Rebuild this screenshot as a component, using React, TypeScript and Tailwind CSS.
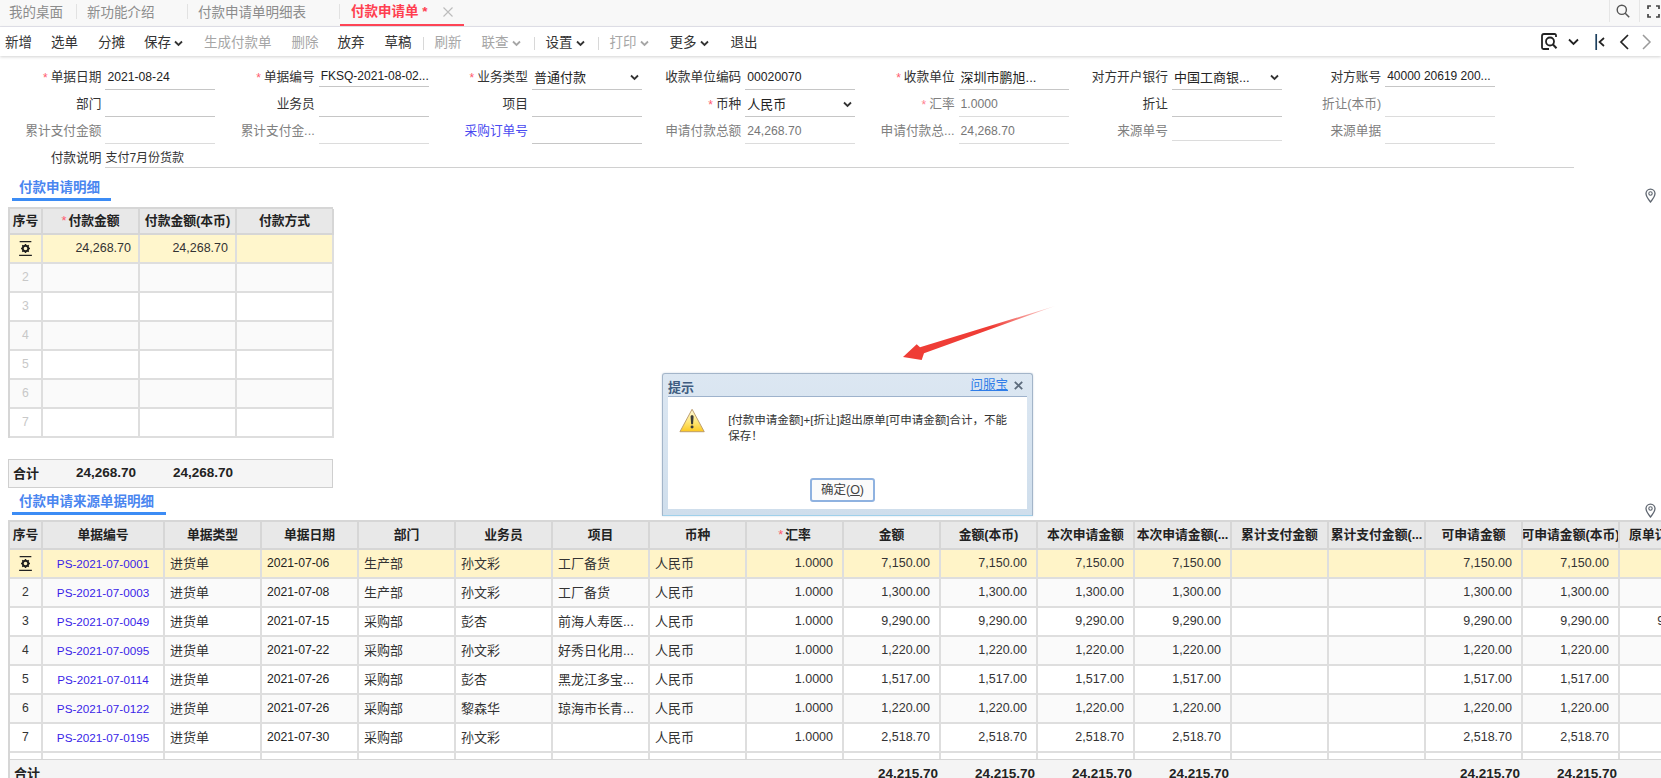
import React from "react";

const Chev = ({ c = "#333" }: { c?: string }) => (
  <svg width="9" height="7" viewBox="0 0 9 7" fill="none" className="shrink-0">
    <path d="M1 1.5l3.5 3.5L8 1.5" stroke={c} strokeWidth="1.8" />
  </svg>
);

const Pin = () => (
  <svg width="11" height="15" viewBox="0 0 11 15" fill="none">
    <path d="M5.5 14C3 11 1 8.4 1 5.6a4.5 4.5 0 0 1 9 0C10 8.4 8 11 5.5 14z" stroke="#5f6670" strokeWidth="1.3" />
    <circle cx="5.5" cy="5.5" r="1.7" stroke="#5f6670" strokeWidth="1.1" />
  </svg>
);

const Gear = () => (
  <svg width="17" height="17" viewBox="0 0 16 16" fill="none">
    <path d="M2.5 1.5h11M2 14.5h12" stroke="#222" strokeWidth="1.2" />
    <circle cx="8" cy="8" r="2.6" stroke="#222" strokeWidth="1.8" />
    <path d="M8 3.8v1.4M8 10.8v1.4M3.8 8h1.4M10.8 8h1.4M5 5l1 1M10 10l1 1M11 5l-1 1M6 10l-1 1" stroke="#222" strokeWidth="1.3" />
  </svg>
);

type F = {
  l: string; v?: string; star?: boolean; gray?: boolean; blue?: boolean; chev?: boolean; short?: boolean; cjk?: boolean; small?: boolean;
};

const rows: F[][] = [
  [
    { l: "单据日期", v: "2021-08-24", star: true },
    { l: "单据编号", v: "FKSQ-2021-08-02...", star: true, short: true, small: true },
    { l: "业务类型", v: "普通付款", star: true, chev: true, cjk: true },
    { l: "收款单位编码", v: "00020070" },
    { l: "收款单位", v: "深圳市鹏旭...", star: true, cjk: true },
    { l: "对方开户银行", v: "中国工商银...", chev: true, cjk: true },
    { l: "对方账号", v: "40000 20619 200...", short: true, small: true },
  ],
  [
    { l: "部门" },
    { l: "业务员" },
    { l: "项目" },
    { l: "币种", v: "人民币", star: true, chev: true, cjk: true },
    { l: "汇率", v: "1.0000", star: true, gray: true },
    { l: "折让" },
    { l: "折让(本币)", gray: true },
  ],
  [
    { l: "累计支付金额", gray: true },
    { l: "累计支付金...", gray: true },
    { l: "采购订单号", blue: true },
    { l: "申请付款总额", v: "24,268.70", gray: true },
    { l: "申请付款总...", v: "24,268.70", gray: true },
    { l: "来源单号", gray: true, short: true },
    { l: "来源单据", gray: true },
  ],
];

const Field = ({ f }: { f: F }) => (
  <div className="flex items-start h-[27px]">
    <div className={`w-[99px] h-[24px] mt-[3px] flex items-center justify-end text-[12.7px] whitespace-nowrap ${f.gray ? "text-[#808080]" : f.blue ? "text-[#4a4af0]" : "text-[#333]"}`}>
      {f.star && <span className={`mr-[3px] text-[12px] ${f.gray ? "text-[#ff8090]" : "text-[#ff5a6e]"}`}>*</span>}
      {f.l}
    </div>
    <div
      className={`ml-[4px] w-[110px] mt-[3px] flex items-center justify-between pl-[2px] pr-[3px] border-b whitespace-nowrap ${f.short ? "h-[21px]" : "h-[24px]"} ${f.gray ? "border-[#dcdcdc] text-[#777]" : "border-[#c6c6c6] text-[#222]"} ${f.cjk ? "text-[13px]" : f.small ? "text-[12px]" : "text-[12.2px]"}`}
    >
      <span>{f.v}</span>
      {f.chev && <Chev />}
    </div>
  </div>
);

const SectionHead = ({ title, w, pin }: { title: string; w: string; pin: string }) => (
  <div className="flex items-start">
    <div className={`ml-[12px] flex items-center pl-[7px] border-b-[3px] border-[#3c8cf5] text-[13.5px] font-bold text-[#4a86f0] whitespace-nowrap ${w}`}>
      {title}
    </div>
    <div className={`ml-auto mr-[5px] ${pin}`}>
      <Pin />
    </div>
  </div>
);

const top = "grid-cols-[33px_97px_97px_97px]";
const Wide = "grid-cols-[33px_122px_repeat(16,97px)]";
const cell = "border-r-2 border-b-2 border-[#dedede] flex items-center overflow-hidden whitespace-nowrap";
const head = "border-r-2 border-b-2 border-[#d6d6d6] bg-[#e8e8e8] flex items-center justify-center overflow-hidden whitespace-nowrap text-[12.8px] font-bold text-[#222]";
const num = "justify-end pr-[9px] text-[12.5px] text-[#333]";
const numTop = "justify-end pr-[7px] text-[12.5px] text-[#333]";
const txt = "pl-[5px] text-[13px] text-[#333]";

const heads = ["序号", "单据编号", "单据类型", "单据日期", "部门", "业务员", "项目", "币种", "*汇率", "金额", "金额(本币)", "本次申请金额", "本次申请金额(...", "累计支付金额", "累计支付金额(...", "可申请金额", "可申请金额(本币)", "原单订单金额"];

const data = [
  ["0001", "07-06", "生产部", "孙文彩", "工厂备货", "7,150.00"],
  ["0003", "07-08", "生产部", "孙文彩", "工厂备货", "1,300.00"],
  ["0049", "07-15", "采购部", "彭杏", "前海人寿医...", "9,290.00"],
  ["0095", "07-22", "采购部", "孙文彩", "好秀日化用...", "1,220.00"],
  ["0114", "07-26", "采购部", "彭杏", "黑龙江多宝...", "1,517.00"],
  ["0122", "07-26", "采购部", "黎森华", "琼海市长青...", "1,220.00"],
  ["0195", "07-30", "采购部", "孙文彩", "", "2,518.70"],
];

const Arrow = () => (
  <svg width="160" height="64" viewBox="0 0 160 64" className="absolute left-[900px] top-[300px]">
    <defs>
      <linearGradient id="ar" x1="0" y1="1" x2="1" y2="0">
        <stop offset="0.6" stopColor="#ef3d36" />
        <stop offset="1" stopColor="#ef3d36" stopOpacity="0.15" />
      </linearGradient>
    </defs>
    <path d="M3 57L16.7 44.3L20 47.3L155 6L24 53.3L21.7 60Z" fill="url(#ar)" />
  </svg>
);

const Warn = () => (
  <svg width="29" height="27" viewBox="0 0 28 26">
    <defs>
      <linearGradient id="wy" x1="0" y1="0" x2="0" y2="1">
        <stop offset="0" stopColor="#fffbe0" />
        <stop offset="0.55" stopColor="#ffe77a" />
        <stop offset="1" stopColor="#fcc81e" />
      </linearGradient>
    </defs>
    <path d="M14 1L27 25H1Z" fill="url(#wy)" stroke="#b9996a" strokeWidth="1" strokeLinejoin="round" />
    <path d="M14 7.5c1.2 0 1.7.7 1.6 1.7L15 17h-2l-.6-7.8c-.1-1 .4-1.7 1.6-1.7z" fill="#3a3a3a" />
    <circle cx="14" cy="20" r="1.6" fill="#3a3a3a" />
  </svg>
);

export default function App() {
  return (
    <div className="relative w-[1661px] h-[778px] overflow-hidden bg-white font-['Liberation_Sans','Noto_Sans_CJK_SC',sans-serif]">
      {/* Tabs */}
      <div className="flex items-start h-[27px] bg-[#f8f8f8] border-b border-[#e4e4ec] text-[13.5px] text-[#8c8c8c]">
        <div className="w-[77px] h-[26px] pl-[9px] flex items-center">我的桌面<span className="ml-auto mb-[3px] w-px h-[15px] bg-[#e2e2e2]" /></div>
        <div className="w-[111px] h-[26px] pl-[10px] flex items-center">新功能介绍<span className="ml-auto mb-[3px] w-px h-[15px] bg-[#e2e2e2]" /></div>
        <div className="w-[152px] h-[26px] pl-[10px] flex items-center">付款申请单明细表<span className="ml-auto mb-[3px] w-px h-[15px] bg-[#e2e2e2]" /></div>
        <div className="w-[124px] h-[26px] pl-[11px] flex items-center border-b-[2.5px] border-[#ff4556] text-[#ff3f50] font-bold">
          付款申请单 *
          <svg width="10" height="10" viewBox="0 0 10 10" className="ml-[15px]"><path d="M0.5 0.5l9 9M9.5 0.5l-9 9" stroke="#bcbcbc" strokeWidth="1.1" /></svg>
        </div>
        <div className="ml-auto flex items-center h-[22px]">
          <div className="w-[30px] h-[22px] border-l border-[#e6e6e6] flex items-center pl-[6px]">
            <svg width="14" height="14" viewBox="0 0 14 14" fill="none"><circle cx="5.8" cy="5.8" r="4.6" stroke="#555" strokeWidth="1.4" /><path d="M9.2 9.2l4 4" stroke="#555" strokeWidth="1.5" /></svg>
          </div>
          <div className="w-[22px] h-[22px] border-l border-[#e6e6e6] flex items-center pl-[7px]">
            <svg width="13" height="13" viewBox="0 0 13 13" fill="none"><path d="M1 4V1h3M9 1h3v3M12 9v3H9M4 12H1V9" stroke="#444" strokeWidth="1.7" /></svg>
          </div>
        </div>
      </div>

      {/* Toolbar */}
      <div className="relative flex items-center h-[29px] bg-white shadow-[0_1px_3px_rgba(0,0,0,0.18)] text-[13.5px] text-[#333] whitespace-nowrap pl-[5px]">
        <div className="flex items-center pt-[3px]">
          <span>新增</span>
          <span className="ml-[19px]">选单</span>
          <span className="ml-[20px]">分摊</span>
          <span className="ml-[19px] flex items-center gap-[3px]">保存<Chev /></span>
          <span className="ml-[21px] text-[#a6a6a6]">生成付款单</span>
          <span className="ml-[20px] text-[#a6a6a6]">删除</span>
          <span className="ml-[19px]">放弃</span>
          <span className="ml-[20px]">草稿</span>
          <span className="ml-[11px] w-px h-[13px] bg-[#d8d8d8]" />
          <span className="ml-[11px] text-[#a6a6a6]">刷新</span>
          <span className="ml-[20px] flex items-center gap-[3px] text-[#a6a6a6]">联查<Chev c="#a6a6a6" /></span>
          <span className="ml-[13px] w-px h-[13px] bg-[#d8d8d8]" />
          <span className="ml-[11px] flex items-center gap-[3px]">设置<Chev /></span>
          <span className="ml-[13px] w-px h-[13px] bg-[#d8d8d8]" />
          <span className="ml-[11px] flex items-center gap-[3px] text-[#a6a6a6]">打印<Chev c="#a6a6a6" /></span>
          <span className="ml-[21px] flex items-center gap-[3px]">更多<Chev /></span>
          <span className="ml-[22px]">退出</span>
        </div>
        <div className="ml-auto flex items-center pr-[9px]">
          <svg width="17" height="17" viewBox="0 0 17 17" fill="none">
            <path d="M15 4V2.5Q15 1 13.5 1H3Q1 1 1 3V14.5Q1 16 2.5 16H8" stroke="#222" strokeWidth="1.8" />
            <circle cx="9" cy="8.5" r="4" stroke="#222" strokeWidth="1.8" />
            <path d="M12 11.5l3.5 3.8" stroke="#222" strokeWidth="2" />
          </svg>
          <span className="ml-[10px]"><svg width="11" height="8" viewBox="0 0 11 8" fill="none"><path d="M1 1.5l4.5 4.5L10 1.5" stroke="#222" strokeWidth="1.8" /></svg></span>
          <svg width="10" height="16" viewBox="0 0 10 16" fill="none" className="ml-[16px]"><path d="M1.2 0v16" stroke="#1c3f5e" strokeWidth="1.7" /><path d="M9 4l-4.5 4L9 12" stroke="#222" strokeWidth="1.7" /></svg>
          <svg width="10" height="16" viewBox="0 0 10 16" fill="none" className="ml-[14px]"><path d="M9 1L2 8l7 7" stroke="#222" strokeWidth="1.7" /></svg>
          <svg width="10" height="16" viewBox="0 0 10 16" fill="none" className="ml-[13px]"><path d="M1 1l7 7-7 7" stroke="#9a9a9a" strokeWidth="1.5" /></svg>
        </div>
      </div>

      {/* Form */}
      <div className="pt-[7px] pl-[2.4px]">
        {rows.map((r, i) => (
          <div key={i} className="grid grid-cols-[repeat(7,213.3px)]">
            {r.map((f, j) => (
              <Field key={j} f={f} />
            ))}
          </div>
        ))}
        <div className="flex items-end h-[24px]">
          <div className="w-[99px] h-[21px] pt-[2px] flex items-center justify-end text-[12.7px] text-[#333]">付款说明</div>
          <div className="ml-[4px] w-[1469px] h-[21px] pt-[2px] flex items-center border-b border-[#d0d0d0] text-[12px] text-[#333]">支付7月份货款</div>
        </div>
      </div>

      {/* Section 1 */}
      <div className="mt-[9px]">
        <SectionHead title="付款申请明细" w="w-[99px] h-[24px] pt-[2px]" pin="mt-[11px]" />
      </div>
      <div className={`mt-[4px] ml-[8px] w-[325px] border-t-2 border-l-2 border-[#d6d6d6] grid ${top}`}>
        <div className={`${head} h-[26px]`}>序号</div>
        <div className={head}><span className="text-[#ff5a6e] font-normal mr-[2px]">*</span>付款金额</div>
        <div className={head}>付款金额(本币)</div>
        <div className={head}>付款方式</div>
        <div className={`${cell} h-[29px] bg-[#fff6cc] justify-center`}><Gear /></div>
        <div className={`${cell} bg-[#fff6cc] ${numTop}`}>24,268.70</div>
        <div className={`${cell} bg-[#fff6cc] ${numTop}`}>24,268.70</div>
        <div className={`${cell} bg-[#fff6cc]`} />
        {[2, 3, 4, 5, 6, 7].map((n) => (
          <React.Fragment key={n}>
            <div className={`${cell} h-[29px] justify-center text-[12.2px] text-[#c8c8c8] ${n % 2 === 0 ? "bg-[#fafafa]" : "bg-white"}`}>{n}</div>
            <div className={`${cell} ${n % 2 === 0 ? "bg-[#fafafa]" : "bg-white"}`} />
            <div className={`${cell} ${n % 2 === 0 ? "bg-[#fafafa]" : "bg-white"}`} />
            <div className={`${cell} ${n % 2 === 0 ? "bg-[#fafafa]" : "bg-white"}`} />
          </React.Fragment>
        ))}
      </div>

      {/* Summary */}
      <div className={`mt-[21px] ml-[8px] w-[325px] h-[29px] border border-[#cfcfcf] bg-[#f5f5f5] grid ${top} items-center text-[13.5px] font-bold text-[#222]`}>
        <div className="pl-[4px] text-[13px]">合计</div>
        <div className="text-right pr-[3px]">24,268.70</div>
        <div className="text-right pr-[3px]">24,268.70</div>
        <div />
      </div>

      {/* Section 2 */}
      <div className="mt-[4px]">
        <SectionHead title="付款申请来源单据明细" w="w-[154px] h-[23px]" pin="mt-[11px]" />
      </div>
      <div className="mt-[2px] ml-[8px] overflow-hidden border-t-2 border-l-2 border-[#d6d6d6]">
        <div className={`grid ${Wide} w-[1707px]`}>
          {heads.map((h) => (
            <div key={h} className={`${head} h-[28px]`}>
              {h.startsWith("*") ? (
                <>
                  <span className="text-[#ff5a6e] font-normal mr-[2px]">*</span>
                  {h.slice(1)}
                </>
              ) : (
                h
              )}
            </div>
          ))}
          {data.map((d, i) => {
            const bg = i === 0 ? "bg-[#fff4c8]" : i % 2 === 1 ? "bg-[#fafafa]" : "bg-white";
            return (
              <React.Fragment key={i}>
                <div className={`${cell} ${bg} h-[29px] justify-center text-[12.2px] text-[#333]`}>{i === 0 ? <Gear /> : i + 1}</div>
                <div className={`${cell} ${bg} justify-center text-[11.7px] text-[#3a1fe8]`}>PS-2021-07-{d[0]}</div>
                <div className={`${cell} ${bg} ${txt}`}>进货单</div>
                <div className={`${cell} ${bg} pl-[5px] text-[12.2px] text-[#222]`}>2021-{d[1]}</div>
                <div className={`${cell} ${bg} ${txt}`}>{d[2]}</div>
                <div className={`${cell} ${bg} ${txt}`}>{d[3]}</div>
                <div className={`${cell} ${bg} ${txt}`}>{d[4]}</div>
                <div className={`${cell} ${bg} ${txt}`}>人民币</div>
                <div className={`${cell} ${bg} ${num}`}>1.0000</div>
                <div className={`${cell} ${bg} ${num}`}>{d[5]}</div>
                <div className={`${cell} ${bg} ${num}`}>{d[5]}</div>
                <div className={`${cell} ${bg} ${num}`}>{d[5]}</div>
                <div className={`${cell} ${bg} ${num}`}>{d[5]}</div>
                <div className={`${cell} ${bg}`} />
                <div className={`${cell} ${bg}`} />
                <div className={`${cell} ${bg} ${num}`}>{d[5]}</div>
                <div className={`${cell} ${bg} ${num}`}>{d[5]}</div>
                <div className={`${cell} ${bg} ${num}`}>{i === 2 ? "9,290.00" : ""}</div>
              </React.Fragment>
            );
          })}
          {heads.map((h) => (
            <div key={h} className="h-[6px] border-r-2 border-[#dedede] bg-white" />
          ))}
        </div>
        <div className={`grid ${Wide} w-[1707px] h-[29px] items-center bg-[#f4f4f4] border-t border-[#d6d6d6] text-[13.5px] font-bold text-[#222] whitespace-nowrap`}>
          <div className="pl-[4px] text-[13px] col-span-9">合计</div>
          <div className="text-right pr-[3px]">24,215.70</div>
          <div className="text-right pr-[3px]">24,215.70</div>
          <div className="text-right pr-[3px]">24,215.70</div>
          <div className="text-right pr-[3px]">24,215.70</div>
          <div />
          <div />
          <div className="text-right pr-[3px]">24,215.70</div>
          <div className="text-right pr-[3px]">24,215.70</div>
          <div />
        </div>
      </div>

      {/* Watermark */}
      <div className="absolute left-[40px] top-[-10px] grid grid-cols-[repeat(6,300px)] auto-rows-[125px] pointer-events-none text-[rgba(0,0,0,0.022)] text-[17px] leading-[24px]">
        {Array.from({ length: 42 }).map((_, i) => (
          <div key={i} className="h-[125px] flex flex-col justify-center -rotate-[18deg] origin-left">
            <span>孙文彩7966</span>
            <span className="pl-[6px]">08240850</span>
          </div>
        ))}
      </div>

      <Arrow />

      {/* Dialog */}
      <div className="absolute left-[662px] top-[373px] w-[371px] h-[143px] px-[5px] pb-[6px] flex flex-col rounded-t-[3px] border border-[#a3b5c9] border-b-[#9fd0ea] bg-gradient-to-b from-[#dce7f2] to-[#cfdeec] shadow-[0_0_2px_rgba(120,150,180,0.4)]">
        <div className="h-[22px] flex items-center text-[13px] font-bold text-[#3f5c80]">
          <span className="mt-[6px]">提示</span>
          <span className="ml-auto mr-[6px] text-[12.5px] text-[#2f7de8] underline font-normal">问服宝</span>
          <svg width="9" height="9" viewBox="0 0 9 9" className="mr-[4px]"><path d="M0.8 0.8l7.4 7.4M8.2 0.8l-7.4 7.4" stroke="#5c6b7c" strokeWidth="1.8" /></svg>
        </div>
        <div className="flex-1 flex flex-col bg-white border-t border-[#9eb2cc] pt-[10px]">
          <div className="flex items-start pl-[11px] pr-[16px]">
            <Warn />
            <p className="ml-[23px] mt-[5px] text-[11.5px] leading-[16px] text-[#333]">[付款申请金额]+[折让]超出原单[可申请金额]合计，不能保存！</p>
          </div>
          <div className="mt-auto mb-[7px] ml-[142px] w-[65px] h-[24px] flex items-center justify-center rounded-[3px] border-2 border-[#8fb2e0] bg-[#fbfbfb] text-[12.5px] text-[#444]">
            确定(<span className="underline">O</span>)
          </div>
        </div>
      </div>
    </div>
  );
}
